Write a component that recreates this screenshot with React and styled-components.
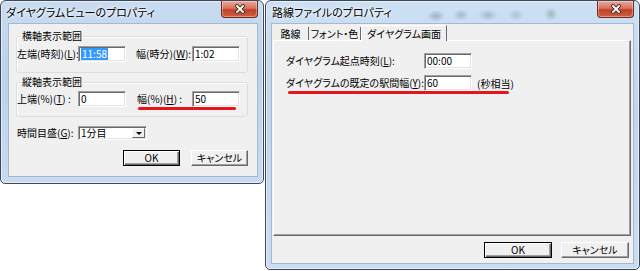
import React from 'react';
import styled, { createGlobalStyle } from 'styled-components';

const GlobalStyle = createGlobalStyle`
  html, body { margin: 0; padding: 0; background: #fff; }
  body {
    font-family: "Noto Sans CJK JP", "Noto Sans", sans-serif;
    font-size: 10px;
    color: #000;
  }
  * { box-sizing: border-box; }
`;

const Desktop = styled.div`
  display: flex;
  align-items: flex-start;
  gap: 1px;
  width: 640px;
  height: 271px;
  overflow: hidden;
  background: #fff;
`;

const Window = styled.div`
  flex: none;
  width: ${p => p.$w}px;
  height: ${p => p.$h}px;
  display: flex;
  flex-direction: column;
  padding: 0 ${p => p.$right}px ${p => p.$bottom}px ${p => p.$left}px;
  border: 1px solid #3d4756;
  border-radius: 6px 6px 5px 5px;
  background: ${p => p.$glass
    ? `radial-gradient(ellipse 9px 6px at 170px 15px, rgba(80,95,110,.35), transparent),
       radial-gradient(ellipse 8px 6px at 195px 14px, rgba(80,95,110,.3), transparent),
       radial-gradient(ellipse 10px 6px at 222px 14px, rgba(80,95,110,.3), transparent),
       radial-gradient(ellipse 8px 6px at 250px 14px, rgba(90,110,120,.25), transparent),
       radial-gradient(ellipse 7px 7px at 285px 13px, rgba(80,120,80,.35), transparent),
       linear-gradient(180deg, #cde0f3 0%, #c0d6ee 40%, #c9ddf2 100%)`
    : 'linear-gradient(180deg, #c8dbf0 0%, #bcd3ec 40%, #c7dbf1 100%)'};
  box-shadow: inset 0 0 0 1px rgba(255, 255, 255, 0.55);
`;

const TitleBar = styled.div`
  flex: none;
  height: 22px;
  display: flex;
  align-items: flex-start;
  justify-content: space-between;
  margin-left: ${p => p.$indent}px;
`;

const Title = styled.div`
  padding-top: 4px;
  font-size: 11px;
  line-height: 14px;
  font-feature-settings: "palt";
  text-shadow: 0 0 5px #fff, 0 0 3px #fff;
`;

const CloseButton = styled.div`
  width: 37px;
  height: 17px;
  display: flex;
  align-items: center;
  justify-content: center;
  border: 1px solid #6b2a22;
  border-top: none;
  border-radius: 0 0 4px 4px;
  background: linear-gradient(180deg, #e9a99b 0%, #d9735f 45%, #c23f28 55%, #d0603e 100%);
  box-shadow: inset 0 0 0 1px rgba(255, 255, 255, 0.35);
`;

const Client = styled.div`
  flex: 1;
  display: flex;
  flex-direction: column;
  background: #f0f0f0;
  border: 1px solid #a6b8cd;
  font-feature-settings: "palt";
`;

const Group = styled.fieldset`
  margin: ${p => p.$mt}px 9px 0 7px;
  padding: ${p => p.$pt}px 0 ${p => p.$pb}px 0;
  min-width: 0;
  border: 1px solid #d5dfe5;
  border-radius: 3px;
  box-shadow: inset 1px 1px 0 #fff;
`;

const Legend = styled.legend`
  margin-left: 4px;
  padding: 0 1px;
  line-height: 12px;
`;

const Row = styled.div`
  position: relative;
  display: flex;
  align-items: center;
  height: 16px;
  margin: ${p => p.$m || '0'};
`;

const Label = styled.span`
  flex: none;
  width: ${p => p.$w}px;
  margin-left: ${p => p.$ml || 0}px;
  padding-left: ${p => p.$pl || 0}px;
  white-space: nowrap;
  line-height: 16px;
`;

const Edit = styled.div`
  flex: none;
  width: ${p => p.$w}px;
  height: 16px;
  padding: 0 2px;
  display: flex;
  align-items: center;
  background: #fff;
  border: 1px solid;
  border-color: #a0a0a0 #fff #fff #a0a0a0;
  box-shadow: inset 1px 1px 0 #696969, inset -1px -1px 0 #e3e3e3;
  line-height: 12px;
  white-space: nowrap;
`;

const Selected = styled.span`
  background: #3399ff;
  color: #fff;
  padding: 0 1px;
`;

const Unit = styled.span`
  margin-left: 5px;
  white-space: nowrap;
`;

const Marker = styled.div`
  position: absolute;
  left: ${p => p.$x}px;
  top: 16px;
  width: ${p => p.$w}px;
  height: 3px;
  border-radius: 2px;
  background: #e8131c;
`;

const Combo = styled(Edit)`
  height: 14px;
  padding: 0 1px 0 2px;
  justify-content: space-between;
`;

const DropButton = styled.div`
  width: 13px;
  height: 10px;
  display: flex;
  align-items: center;
  justify-content: center;
  background: #f0f0f0;
  border: 1px solid;
  border-color: #fff #696969 #696969 #fff;
  &::after {
    content: "";
    border-left: 3px solid transparent;
    border-right: 3px solid transparent;
    border-top: 3px solid #000;
  }
`;

const ButtonRow = styled.div`
  display: flex;
  justify-content: flex-end;
  gap: ${p => p.$gap}px;
  margin-top: ${p => p.$mt}px;
  padding-right: ${p => p.$pr}px;
  padding-bottom: ${p => p.$pb || 0}px;
`;

const Button = styled.div`
  width: ${p => p.$w}px;
  height: 16px;
  display: flex;
  align-items: center;
  justify-content: center;
  background: #f0f0f0;
  border: 1px solid;
  border-color: ${p => p.$default ? '#000' : '#fff #696969 #696969 #fff'};
  box-shadow: ${p => p.$default
    ? 'inset 1px 1px 0 #fff, inset -1px -1px 0 #696969, inset -2px -2px 0 #a0a0a0'
    : 'inset -1px -1px 0 #a0a0a0'};
  line-height: 12px;
`;

const TabStrip = styled.div`
  display: flex;
  align-items: flex-end;
  height: 15px;
  margin: 1px 2px 0 1px;
`;

const Tab = styled.div`
  position: relative;
  z-index: ${p => p.$active ? 1 : 0};
  width: ${p => p.$w}px;
  height: ${p => p.$active ? 16 : 13}px;
  margin-bottom: ${p => p.$active ? -1 : 0}px;
  display: flex;
  align-items: center;
  justify-content: center;
  background: #f0f0f0;
  border-right: 1px solid #696969;
  border-left: ${p => p.$active ? '1px solid #fff' : 'none'};
  border-top: ${p => p.$active ? '1px solid #fff' : 'none'};
  line-height: 12px;
  white-space: nowrap;
`;

const TabPanel = styled.div`
  flex: 1;
  margin: 0 2px 0 1px;
  padding: 12px 0 0 12px;
  display: flex;
  flex-direction: column;
  gap: 6px;
  border: 1px solid;
  border-color: #fff #696969 #696969 #fff;
  box-shadow: inset -1px -1px 0 #a0a0a0;
`;

function CloseIcon() {
  return (
    <svg width="12" height="10" viewBox="0 0 12 10">
      <path d="M3 2 L9 8 M9 2 L3 8" stroke="#4a2a24" strokeWidth="3.6" strokeLinecap="square" />
      <path d="M3 2 L9 8 M9 2 L3 8" stroke="#fff" strokeWidth="1.8" strokeLinecap="square" />
    </svg>
  );
}

function DiagramViewDialog() {
  return (
    <Window $w={264} $h={184} $left={7} $right={5} $bottom={6}>
      <TitleBar $indent={-2}>
        <Title>ダイヤグラムビューのプロパティ</Title>
        <CloseButton><CloseIcon /></CloseButton>
      </TitleBar>
      <Client>
        <Group $mt={6} $pt={4} $pb={10}>
          <Legend>横軸表示範囲</Legend>
          <Row>
            <Label $w={61}>左端(時刻)(<u>L</u>):</Label>
            <Edit $w={48}><Selected>11:58</Selected></Edit>
            <Label $w={56} $ml={10}>幅(時分)(<u>W</u>):</Label>
            <Edit $w={48}>1:02</Edit>
          </Row>
        </Group>
        <Group $mt={3} $pt={3} $pb={9}>
          <Legend>縦軸表示範囲</Legend>
          <Row>
            <Label $w={61}>上端(%)(<u>T</u>) :</Label>
            <Edit $w={48}>0</Edit>
            <Label $w={55} $ml={11}>幅(%)(<u>H</u>) :</Label>
            <Edit $w={48}>50</Edit>
            <Marker $x={121} $w={98} />
          </Row>
        </Group>
        <Row $m="8px 0 0 7px">
          <Label $w={62} $pl={1}>時間目盛(<u>G</u>):</Label>
          <Combo $w={69}>
            1分目
            <DropButton />
          </Combo>
        </Row>
        <ButtonRow $gap={11} $mt={9} $pr={9}>
          <Button $w={57} $default>OK</Button>
          <Button $w={57}>キャンセル</Button>
        </ButtonRow>
      </Client>
    </Window>
  );
}

function RouteFileDialog() {
  return (
    <Window $w={375} $h={270} $left={5} $right={5} $bottom={5} $glass>
      <TitleBar $indent={1}>
        <Title>路線ファイルのプロパティ</Title>
        <CloseButton><CloseIcon /></CloseButton>
      </TitleBar>
      <Client>
        <TabStrip>
          <Tab $w={36}>路線</Tab>
          <Tab $w={52}>フォント・色</Tab>
          <Tab $w={86} $active>ダイヤグラム画面</Tab>
        </TabStrip>
        <TabPanel>
          <Row>
            <Label $w={138}>ダイヤグラム起点時刻(<u>L</u>):</Label>
            <Edit $w={48}>00:00</Edit>
          </Row>
          <Row>
            <Label $w={138}>ダイヤグラムの既定の駅間幅(<u>Y</u>):</Label>
            <Edit $w={48}>60</Edit>
            <Unit>(秒相当)</Unit>
            <Marker $x={2} $w={221} />
          </Row>
        </TabPanel>
        <ButtonRow $gap={9} $mt={6} $pr={4} $pb={5}>
          <Button $w={68} $default>OK</Button>
          <Button $w={68}>キャンセル</Button>
        </ButtonRow>
      </Client>
    </Window>
  );
}

export default function App() {
  return (
    <>
      <GlobalStyle />
      <Desktop>
        <DiagramViewDialog />
        <RouteFileDialog />
      </Desktop>
    </>
  );
}
